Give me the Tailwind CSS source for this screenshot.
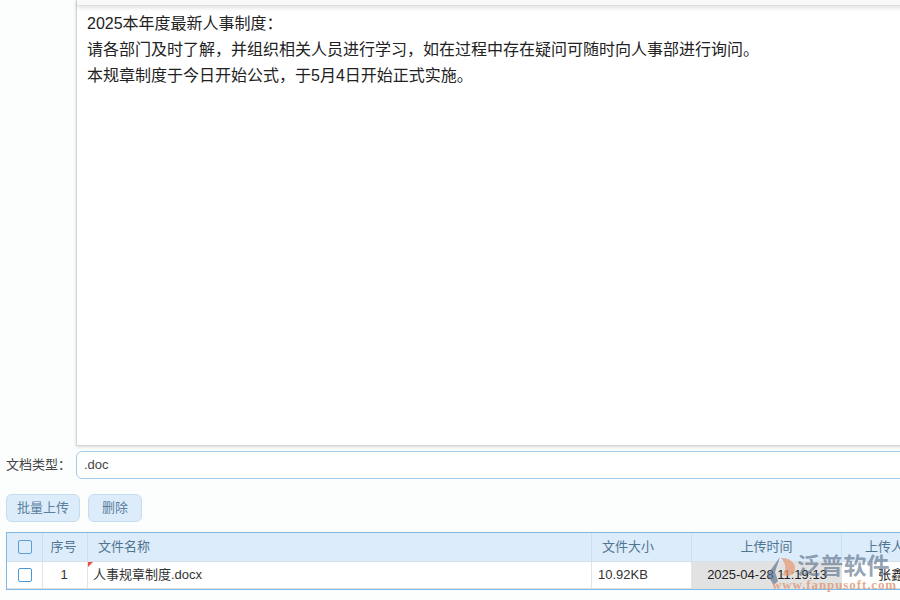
<!DOCTYPE html>
<html lang="zh">
<head>
<meta charset="utf-8">
<script src="https://cdn.jsdelivr.net/npm/@tailwindcss/browser@4"></script>
</head>
<body class="m-0 bg-[#fcfefe]">
<div class="relative w-[900px] h-[600px] overflow-hidden bg-[#fcfefe] text-[13px] font-['Liberation_Sans','Noto_Sans_CJK_SC',sans-serif] text-[#333]">
  <div class="pl-[76px] w-[920px]">
    <div class="h-[446px] bg-white border-l border-b border-[#d4d4d4] shadow-[0_1px_3px_rgba(0,0,0,0.15)] flex flex-col">
      <div class="h-[6px] shrink-0 bg-[#f9f9f9] border-b border-[#dedede] shadow-[0_2px_4px_rgba(0,0,0,0.12)]"></div>
      <div class="pl-[10px] pt-[5px] text-[16px] leading-[26px] text-[#222]">
        <p>2025本年度最新人事制度：</p>
        <p>请各部门及时了解，并组织相关人员进行学习，如在过程中存在疑问可随时向人事部进行询问。</p>
        <p>本规章制度于今日开始公式，于5月4日开始正式实施。</p>
      </div>
    </div>
  </div>

  <div class="flex items-center mt-[5px] h-[28px]">
    <label class="w-[76px] pl-[6px] shrink-0 text-[#444]">文档类型：</label>
    <div class="w-[840px] shrink-0 h-[28px] border border-[#a3cbe9] rounded-[6px] bg-white pl-[7px] flex items-center text-[#444]">.doc</div>
  </div>

  <div class="flex gap-2 pl-[6px] mt-[15px]">
    <button class="h-[28px] w-[74px] rounded-[6px] border border-[#c5dcef] bg-[#ddecfa] text-[#5a7f9f] text-[13px]">批量上传</button>
    <button class="h-[28px] w-[54px] rounded-[6px] border border-[#c5dcef] bg-[#ddecfa] text-[#5a7f9f] text-[13px]">删除</button>
  </div>

  <div class="ml-[6px] mt-[10px] w-[920px] h-[58px] border border-[#7db8e8] flex flex-col">
    <div class="flex h-[29px] shrink-0 bg-[#ddecfb] text-[#4f7591] border-b border-[#d5dfe8]">
      <div class="w-[36px] shrink-0 flex items-center justify-center border-r border-[#c6dff3]">
        <span class="w-[14px] h-[14px] border border-[#5c9fd6] rounded-[2px]"></span>
      </div>
      <div class="w-[45px] shrink-0 flex items-center justify-center pr-[3px] border-r border-[#c6dff3]">序号</div>
      <div class="w-[504px] shrink-0 flex items-center pl-[10px] border-r border-[#c6dff3]">文件名称</div>
      <div class="w-[100px] shrink-0 flex items-center pl-[10px] border-r border-[#c6dff3]">文件大小</div>
      <div class="w-[150px] shrink-0 flex items-center justify-center border-r border-[#c6dff3]">上传时间</div>
      <div class="w-[84px] shrink-0 flex items-center justify-center pl-[1px]">上传人</div>
    </div>
    <div class="flex flex-1 bg-white text-[#333] border-b border-[#e2e2e2]">
      <div class="w-[36px] shrink-0 flex items-center justify-center border-r border-[#e4e4e4]">
        <span class="w-[14px] h-[14px] border border-[#4a98d8] rounded-[2px] bg-white"></span>
      </div>
      <div class="w-[45px] shrink-0 flex items-center justify-center pr-[2px] border-r border-[#e4e4e4]">1</div>
      <div class="relative w-[504px] shrink-0 flex items-center pl-[5px] border-r border-[#e4e4e4]">
        <span class="absolute left-0 top-0 w-0 h-0 border-t-[5px] border-r-[5px] border-t-[#e8503a] border-r-transparent"></span>
        人事规章制度.docx
      </div>
      <div class="w-[100px] shrink-0 flex items-center pl-[6px] border-r border-[#e4e4e4]">10.92KB</div>
      <div class="w-[150px] shrink-0 flex items-center justify-center bg-[#e2e2e2] text-[#222]">2025-04-28 11:19:13</div>
      <div class="w-[84px] shrink-0 flex items-center pl-[36px] text-[#222] whitespace-nowrap">张鑫</div>
    </div>
  </div>

  <!-- watermark -->
  <div class="absolute left-[765px] top-[550px] w-[135px] h-[46px] pointer-events-none">
    <svg class="absolute left-0 top-[5px]" width="34" height="32" viewBox="0 0 34 32">
      <path d="M15 2 L2 20 L9 30 L13 26 L10 17 Z" fill="#5f7694" fill-opacity="0.7"/>
      <path d="M16 3 C24 2 31 8 30 14 C30 20 24 22 17 20 C22 16 21 8 16 3 Z" fill="#e59b78" fill-opacity="0.75"/>
    </svg>
    <div class="absolute left-[32px] top-[2px] text-[23px] leading-[29px] font-bold tracking-[0.2px] text-[#5a7089]/65 whitespace-nowrap">泛普软件</div>
    <div class="absolute left-[7px] top-[28px] text-[13px] leading-[14px] font-bold tracking-[0.9px] font-['Liberation_Serif',serif] text-[#e0946e]/80 whitespace-nowrap">www.fanpusoft.com</div>
  </div>
</div>
</body>
</html>
